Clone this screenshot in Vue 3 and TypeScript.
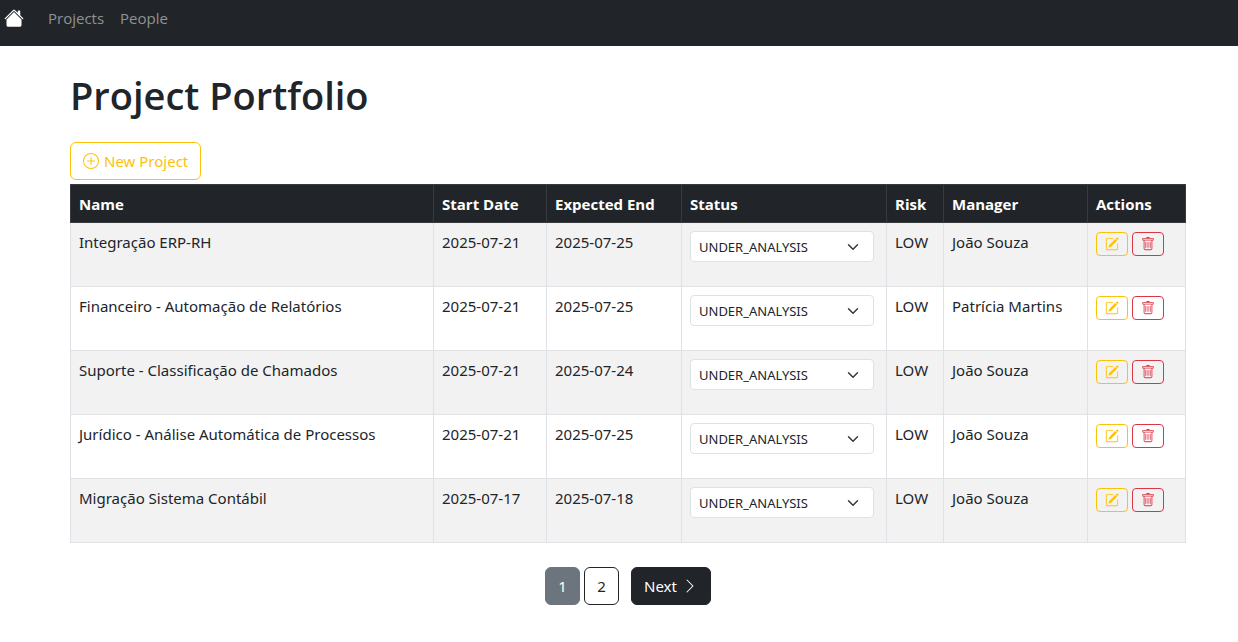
<script setup lang="ts">
import { ref } from 'vue'

interface Project {
  id: number
  name: string
  start: string
  end: string
  status: string
  risk: string
  manager: string
}

const statuses: string[] = ['UNDER_ANALYSIS', 'APPROVED', 'STARTED', 'IN_PROGRESS', 'CLOSED', 'CANCELED']

const projects = ref<Project[]>([
  { id: 1, name: 'Integração ERP-RH', start: '2025-07-21', end: '2025-07-25', status: 'UNDER_ANALYSIS', risk: 'LOW', manager: 'João Souza' },
  { id: 2, name: 'Financeiro - Automação de Relatórios', start: '2025-07-21', end: '2025-07-25', status: 'UNDER_ANALYSIS', risk: 'LOW', manager: 'Patrícia Martins' },
  { id: 3, name: 'Suporte - Classificação de Chamados', start: '2025-07-21', end: '2025-07-24', status: 'UNDER_ANALYSIS', risk: 'LOW', manager: 'João Souza' },
  { id: 4, name: 'Jurídico - Análise Automática de Processos', start: '2025-07-21', end: '2025-07-25', status: 'UNDER_ANALYSIS', risk: 'LOW', manager: 'João Souza' },
  { id: 5, name: 'Migração Sistema Contábil', start: '2025-07-17', end: '2025-07-18', status: 'UNDER_ANALYSIS', risk: 'LOW', manager: 'João Souza' },
])

const page = ref(1)
</script>

<template>
  <div class="app">
    <nav class="navbar">
      <a class="brand" href="#" aria-label="Home">
        <svg viewBox="0 0 16 16" width="20" height="20" fill="currentColor" aria-hidden="true">
          <path d="M8.707 1.5a1 1 0 0 0-1.414 0L.646 8.146a.5.5 0 0 0 .708.708L8 2.207l6.646 6.647a.5.5 0 0 0 .708-.708L13 5.793V2.5a.5.5 0 0 0-.5-.5h-1a.5.5 0 0 0-.5.5v1.293z" />
          <path d="m8 3.293 6 6V13.5a1.5 1.5 0 0 1-1.5 1.5h-9A1.5 1.5 0 0 1 2 13.5V9.293z" />
        </svg>
      </a>
      <a class="nav-link" href="#projects">Projects</a>
      <a class="nav-link" href="#people">People</a>
    </nav>

    <main class="container">
      <h1>Project Portfolio</h1>

      <button type="button" class="btn btn-new">
        <svg viewBox="0 0 16 16" width="16" height="16" fill="currentColor" aria-hidden="true">
          <path d="M8 15A7 7 0 1 1 8 1a7 7 0 0 1 0 14m0 1A8 8 0 1 0 8 0a8 8 0 0 0 0 16" />
          <path d="M8 4a.5.5 0 0 1 .5.5v3h3a.5.5 0 0 1 0 1h-3v3a.5.5 0 0 1-1 0v-3h-3a.5.5 0 0 1 0-1h3v-3A.5.5 0 0 1 8 4" />
        </svg>
        New Project
      </button>

      <table>
        <colgroup>
          <col />
          <col class="col-start" />
          <col class="col-end" />
          <col class="col-status" />
          <col class="col-risk" />
          <col class="col-manager" />
          <col class="col-actions" />
        </colgroup>
        <thead>
          <tr>
            <th scope="col">Name</th>
            <th scope="col">Start Date</th>
            <th scope="col">Expected End</th>
            <th scope="col">Status</th>
            <th scope="col">Risk</th>
            <th scope="col">Manager</th>
            <th scope="col">Actions</th>
          </tr>
        </thead>
        <tbody>
          <tr v-for="p in projects" :key="p.id">
            <td>{{ p.name }}</td>
            <td>{{ p.start }}</td>
            <td>{{ p.end }}</td>
            <td>
              <select v-model="p.status" :aria-label="`Status of ${p.name}`">
                <option v-for="s in statuses" :key="s" :value="s">{{ s }}</option>
              </select>
            </td>
            <td>{{ p.risk }}</td>
            <td>{{ p.manager }}</td>
            <td>
              <div class="actions">
                <button type="button" class="icon-btn edit" :aria-label="`Edit ${p.name}`">
                  <svg viewBox="0 0 16 16" width="14" height="14" fill="currentColor" aria-hidden="true">
                    <path d="M15.502 1.94a.5.5 0 0 1 0 .706L14.459 3.69l-2-2L13.502.646a.5.5 0 0 1 .707 0l1.293 1.293zm-1.75 2.456-2-2L4.939 9.21a.5.5 0 0 0-.121.196l-.805 2.414a.25.25 0 0 0 .316.316l2.414-.805a.5.5 0 0 0 .196-.12l6.813-6.814z" />
                    <path fill-rule="evenodd" d="M1 13.5A1.5 1.5 0 0 0 2.5 15h11a1.5 1.5 0 0 0 1.5-1.5v-6a.5.5 0 0 0-1 0v6a.5.5 0 0 1-.5.5h-11a.5.5 0 0 1-.5-.5v-11a.5.5 0 0 1 .5-.5H9a.5.5 0 0 0 0-1H2.5A1.5 1.5 0 0 0 1 2.5z" />
                  </svg>
                </button>
                <button type="button" class="icon-btn delete" :aria-label="`Delete ${p.name}`">
                  <svg viewBox="0 0 16 16" width="14" height="14" fill="currentColor" aria-hidden="true">
                    <path d="M5.5 5.5A.5.5 0 0 1 6 6v6a.5.5 0 0 1-1 0V6a.5.5 0 0 1 .5-.5m2.5 0a.5.5 0 0 1 .5.5v6a.5.5 0 0 1-1 0V6a.5.5 0 0 1 .5-.5m3 .5a.5.5 0 0 0-1 0v6a.5.5 0 0 0 1 0z" />
                    <path d="M14.5 3a1 1 0 0 1-1 1H13v9a2 2 0 0 1-2 2H5a2 2 0 0 1-2-2V4h-.5a1 1 0 0 1-1-1V2a1 1 0 0 1 1-1H6a1 1 0 0 1 1-1h2a1 1 0 0 1 1 1h3.5a1 1 0 0 1 1 1zM4.118 4 4 4.059V13a1 1 0 0 0 1 1h6a1 1 0 0 0 1-1V4.059L11.882 4zM2.5 3h11V2h-11z" />
                  </svg>
                </button>
              </div>
            </td>
          </tr>
        </tbody>
      </table>

      <nav class="pagination" aria-label="Pages">
        <button
          v-for="n in 2"
          :key="n"
          type="button"
          class="btn page-btn"
          :class="{ current: n === page }"
          @click="page = n"
        >{{ n }}</button>
        <button type="button" class="btn next-btn" @click="page = 2">
          Next
          <svg viewBox="0 0 16 16" width="16" height="16" fill="currentColor" aria-hidden="true">
            <path fill-rule="evenodd" d="M4.646 1.646a.5.5 0 0 1 .708 0l6 6a.5.5 0 0 1 0 .708l-6 6a.5.5 0 0 1-.708-.708L10.293 8 4.646 2.354a.5.5 0 0 1 0-.708" />
          </svg>
        </button>
      </nav>
    </main>
  </div>
</template>

<style>
body {
  background: #fff;
}
</style>

<style scoped>
.app {
  font-family: "Segoe UI", "Noto Sans", "Open Sans", sans-serif;
  font-size: 15px;
  line-height: 24px;
  color: #212529;
}

.app *,
.app *::before {
  box-sizing: border-box;
}

.navbar {
  display: flex;
  align-items: center;
  padding: 6px 0 16px 4px;
  background: #212529;
  font-family: "Segoe UI", "Open Sans", sans-serif;
}

.brand {
  display: flex;
  margin-right: 16px;
  color: #fff;
}

.nav-link {
  padding: 0 8px;
  color: #909294;
  text-decoration: none;
}

.container {
  padding: 26px 52px 24px 70px;
}

h1 {
  margin: 0 0 24px;
  font-family: "Segoe UI", "Open Sans", sans-serif;
  font-size: 38px;
  font-weight: 600;
  line-height: 46px;
}

.btn {
  display: inline-flex;
  align-items: center;
  justify-content: center;
  gap: 5px;
  height: 38px;
  padding: 0 12px;
  border: 1px solid #212529;
  border-radius: 6px;
  background: #fff;
  color: #212529;
  font: inherit;
  cursor: pointer;
}

.btn-new {
  border-color: #ffc107;
  color: #ffc107;
}

table {
  width: 100%;
  margin-top: 4px;
  border-collapse: collapse;
  table-layout: fixed;
}

.col-start { width: 113px; }
.col-end { width: 135px; }
.col-status { width: 205px; }
.col-risk { width: 57px; }
.col-manager { width: 144px; }
.col-actions { width: 98px; }

th {
  padding: 7px 8px 6px;
  border: 1px solid #373b3e;
  background: #212529;
  color: #fff;
  font-family: "Segoe UI", "Open Sans", sans-serif;
  font-weight: 700;
  text-align: left;
  white-space: nowrap;
}

td {
  height: 64px;
  padding: 8px;
  border: 1px solid #dee2e6;
  line-height: 22px;
  vertical-align: top;
  white-space: nowrap;
}

tbody tr:nth-child(odd) td {
  background: #f2f2f2;
}

select {
  display: block;
  width: 184px;
  height: 31px;
  padding: 0 36px 0 8px;
  border: 1px solid #dee2e6;
  border-radius: 4px;
  appearance: none;
  background: #fff url("data:image/svg+xml,%3Csvg xmlns='http://www.w3.org/2000/svg' viewBox='0 0 16 16'%3E%3Cpath fill='none' stroke='%23343a40' stroke-linecap='round' stroke-linejoin='round' stroke-width='2' d='m2 5 6 6 6-6'/%3E%3C/svg%3E") no-repeat right 14px center / 12px 12px;
  color: #212529;
  font-family: inherit;
  font-size: 13px;
}

.actions {
  display: flex;
  gap: 4px;
  padding-top: 1px;
}

.icon-btn {
  display: flex;
  align-items: center;
  justify-content: center;
  width: 32px;
  height: 24px;
  padding: 0;
  border: 1px solid currentColor;
  border-radius: 4px;
  background: transparent;
  cursor: pointer;
}

.edit { color: #ffc107; }
.delete { color: #dc3545; }

.pagination {
  display: flex;
  justify-content: center;
  gap: 4px;
  margin-top: 24px;
}

.page-btn {
  width: 35px;
  padding: 0;
}

.page-btn.current {
  border-color: #6c757d;
  background: #6c757d;
  color: #fff;
}

.next-btn {
  margin-left: 8px;
  background: #212529;
  color: #fff;
}
</style>
